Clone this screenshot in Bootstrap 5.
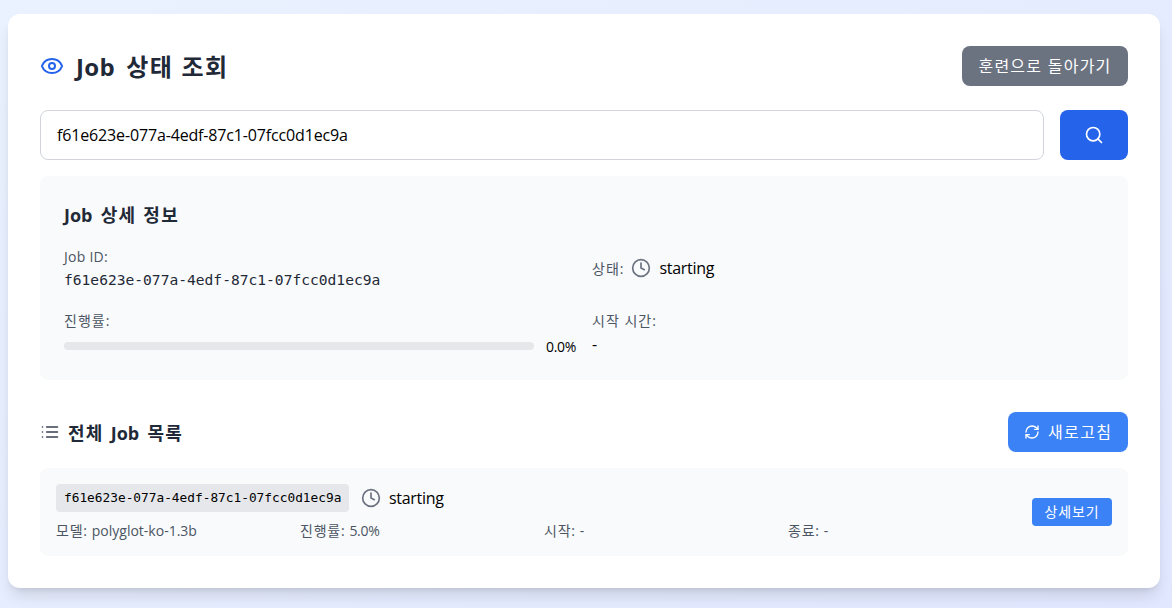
<!DOCTYPE html>
<html lang="ko">
<head>
<meta charset="utf-8">
<meta name="viewport" content="width=device-width, initial-scale=1">
<title>Job 상태 조회</title>
<link href="https://cdn.jsdelivr.net/npm/bootstrap@5.3.0/dist/css/bootstrap.min.css" rel="stylesheet">
<style>
body{min-height:608px;overflow:hidden;padding:14px 12px 20px 8px;color:#000;line-height:24px;font-family:"Open Sans","Noto Sans CJK KR",sans-serif;background:linear-gradient(145deg,#eaf2ff,#e1e7fe)}
.sheet{border-radius:12px;padding:32px;box-shadow:0 10px 15px -3px rgba(0,0,0,.12),0 4px 6px -4px rgba(0,0,0,.12)}
h1,h2{color:#1f2937;font-weight:700;margin:0}
h1{font-size:24px;height:32px;line-height:33px;word-spacing:4.5px;letter-spacing:.4px}
h2{font-size:18px;height:28px;line-height:30px;word-spacing:3.5px}
h1 .ko,h2 .ko{letter-spacing:1.3px;word-spacing:1px}
.btn{border:0;color:#fff!important;line-height:24px;padding:8px 16px;border-radius:8px;white-space:nowrap}
.btn-back{background:#6b7280;width:166px;letter-spacing:1.25px}
.btn-find{background:#2563eb;width:68px}
.btn-reload{background:#3b82f6;width:120px;letter-spacing:1.4px}
.btn-view{background:#3b82f6;width:80px;height:28px;padding:4px 12px;font-size:14px;line-height:20px;border-radius:4px;letter-spacing:.9px}
.form-control{height:50px;border:1px solid #d1d5db;border-radius:8px;padding:0 16px;color:#000;letter-spacing:-.15px}
.panel{background:#f9fafb;border-radius:8px}
.split{display:grid;grid-template-columns:1fr 1fr;gap:16px}
.quad{display:grid;grid-template-columns:repeat(4,1fr);gap:16px;color:#4b5563;font-size:14px;height:20px;line-height:22px}
.quad .ko{letter-spacing:.75px;word-spacing:-.3px}
.lbl{color:#4b5563;font-size:14px;height:24px;line-height:26px}
.lbl.ko{letter-spacing:1px}
.lbl.en{letter-spacing:.25px}
.mono{font-family:"DejaVu Sans Mono","Noto Sans CJK KR",monospace}
.job-id{color:#1f2937;font-size:14.6px}
.job-tag{background:#e5e7eb;border-radius:4px;padding:4px 8px;font-size:12.8px;line-height:20px;width:293px;white-space:nowrap}
.progress{height:8px;background:#e5e7eb;border-radius:8px}
.pct{font-size:14px;height:20px;line-height:22px}
svg{fill:none;stroke:currentColor;stroke-width:2;stroke-linecap:round;stroke-linejoin:round;flex:none}
.ico-eye{color:#2563eb}.ico-clock{color:#6b7280}.ico-list{color:#374151}
.tight{letter-spacing:-.3px}
.state-gap{margin-left:7px}
</style>
</head>
<body>
<svg width="0" height="0" class="position-absolute">
<symbol id="clock" viewBox="0 0 24 24"><circle cx="12" cy="12" r="10"/><path d="M12 6v6l4 2"/></symbol>
</svg>
<main class="sheet bg-white">
  <header class="d-flex justify-content-between align-items-center mb-4">
    <div class="d-flex align-items-center">
      <svg class="ico-eye" width="24" height="24" viewBox="0 0 24 24"><path d="M2.06 12.35a1 1 0 0 1 0-.7 10.75 10.75 0 0 1 19.88 0 1 1 0 0 1 0 .7 10.75 10.75 0 0 1-19.88 0z"/><circle cx="12" cy="12" r="3"/></svg>
      <h1 class="ms-2 ps-1">Job <span class="ko">상태 조회</span></h1>
    </div>
    <button class="btn btn-back" type="button">훈련으로 돌아가기</button>
  </header>
  <div class="d-flex gap-3 mb-3">
    <input class="form-control" type="text" value="f61e623e-077a-4edf-87c1-07fcc0d1ec9a">
    <button class="btn btn-find d-flex align-items-center justify-content-center flex-shrink-0" type="button" aria-label="조회"><svg width="20" height="20" viewBox="0 0 24 24"><circle cx="11" cy="11" r="8"/><path d="m21 21-4.35-4.35"/></svg></button>
  </div>
  <section class="panel p-4">
    <h2 class="mb-3">Job <span class="ko">상세 정보</span></h2>
    <div class="split">
      <div><div class="lbl en">Job ID:</div><div class="mono job-id">f61e623e-077a-4edf-87c1-07fcc0d1ec9a</div></div>
      <div class="d-flex align-items-center"><span class="lbl ko">상태:</span><svg class="ico-clock state-gap" width="20" height="20"><use href="#clock"/></svg><span class="ms-2 tight">starting</span></div>
      <div><div class="lbl ko">진행률:</div><div class="d-flex align-items-center mt-1"><div class="progress flex-grow-1"></div><span class="pct ms-2 ps-1 tight">0.0%</span></div></div>
      <div><div class="lbl ko">시작 시간:</div><div>-</div></div>
    </div>
  </section>
  <div class="d-flex justify-content-between align-items-center mt-4 pt-2 mb-3">
    <div class="d-flex align-items-center"><svg class="ico-list" width="20" height="20" viewBox="0 0 24 24"><path d="M8 6h13M8 12h13M8 18h13M3 6h.01M3 12h.01M3 18h.01"/></svg><h2 class="ms-2"><span class="ko">전체 </span>Job <span class="ko">목록</span></h2></div>
    <button class="btn btn-reload d-flex align-items-center" type="button"><svg width="16" height="16" viewBox="0 0 24 24"><path d="M21 3v5h-5M3 21v-5h5"/><path d="M3 12a9 9 0 0 1 9-9 9.75 9.75 0 0 1 6.74 2.74L21 8M21 12a9 9 0 0 1-9 9 9.75 9.75 0 0 1-6.74-2.74L3 16"/></svg><span class="ms-2">새로고침</span></button>
  </div>
  <section class="panel p-3 d-flex align-items-center">
    <div class="flex-grow-1">
      <div class="d-flex align-items-center mb-2"><div class="mono job-tag">f61e623e-077a-4edf-87c1-07fcc0d1ec9a</div><svg class="ico-clock ms-2 me-2" width="24" height="20" viewBox="-4.8 0 28.8 24"><use href="#clock" width="24" height="24"/></svg><span class="tight">starting</span></div>
      <div class="quad"><div><span class="ko">모델: </span>polyglot-ko-1.3b</div><div><span class="ko">진행률: </span><span class="tight">5.0%</span></div><div><span class="ko">시작: </span>-</div><div><span class="ko">종료: </span>-</div></div>
    </div>
    <button class="btn btn-view ms-3" type="button">상세보기</button>
  </section>
</main>
<script src="https://cdn.jsdelivr.net/npm/bootstrap@5.3.0/dist/js/bootstrap.bundle.min.js"></script>
</body>
</html>
